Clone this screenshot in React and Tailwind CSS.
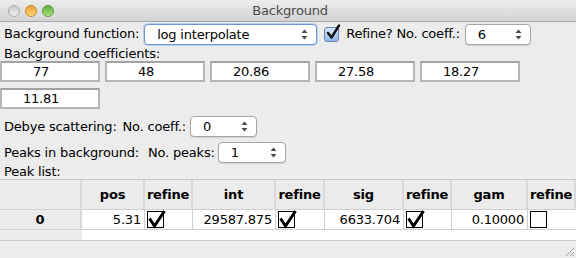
import React from "react";

const font = { fontFamily: '"DejaVu Sans", "Liberation Sans", sans-serif', letterSpacing: "-0.2px" };

function Arrows() {
  return (
    <svg width="7" height="11" viewBox="0 0 7 11" className="shrink-0">
      <path d="M3.5 0.5 L6.5 4 L0.5 4 Z" fill="#4a4a4a" />
      <path d="M3.5 10.5 L6.5 7 L0.5 7 Z" fill="#4a4a4a" />
    </svg>
  );
}

function Select({ value, w, focused }) {
  return (
    <div
      className={
        "flex items-center justify-between h-[21px] rounded-[4px] bg-white pl-[12px] pr-[8px] text-[13px] text-black " +
        (focused
          ? "border border-[#6f95cf] shadow-[0_0_0_1px_#b9d0ef]"
          : "border border-[#a6a6a6] shadow-[0_1px_1px_rgba(0,0,0,0.12)]")
      }
      style={{ width: w }}
    >
      <span className="leading-none">{value}</span>
      <Arrows />
    </div>
  );
}

function MacCheck() {
  return (
    <div className="relative w-[15px] h-[15px] rounded-[3px] border border-[#6d85ad] bg-gradient-to-b from-[#d6e6fa] to-[#8fb6ea]">
      <svg width="16" height="17" viewBox="0 0 16 17" className="absolute left-[0px] top-[-4px]">
        <path d="M3 9 L6.5 13.5 L14 1.5" fill="none" stroke="#111" strokeWidth="2.4" strokeLinecap="round" strokeLinejoin="round" />
      </svg>
    </div>
  );
}

function TableCheck({ checked }) {
  return (
    <div className="relative w-[17px] h-[17px] border-[1.5px] border-black bg-white">
      {checked && (
        <svg width="20" height="20" viewBox="0 0 20 20" className="absolute left-[-1px] top-[-3px]">
          <path d="M2.5 9.5 L7.5 17 L17.5 2" fill="none" stroke="#000" strokeWidth="3" strokeLinejoin="miter" />
        </svg>
      )}
    </div>
  );
}

function Entry({ value }) {
  return (
    <div className="w-[100px] h-[21px] bg-white border-2 border-[#b5b5b5] border-t-[#a3a3a3] flex items-center justify-center pr-[18px] text-[13px] text-black">
      {value}
    </div>
  );
}

const cols = [82, 63, 48, 83, 49, 79, 48, 76, 48];
const headers = ["", "pos", "refine", "int", "refine", "sig", "refine", "gam", "refine"];

export default function App() {
  return (
    <div className="w-[576px] h-[258px] bg-[#ececec] overflow-hidden relative" style={font}>
      {/* Title bar */}
      <div className="h-[22px] relative flex items-center justify-center bg-gradient-to-b from-[#ececec] to-[#d3d3d3] border-b border-[#a7a7a7] rounded-t-[4px]">
        <div className="absolute left-[8px] top-[5px] flex gap-[5px]">
          <div className="w-[12px] h-[12px] rounded-full bg-gradient-to-b from-[#c9c9c9] to-[#f2f2f2] border border-[#a9a9a9]" />
          <div className="w-[12px] h-[12px] rounded-full bg-gradient-to-b from-[#e9a03a] to-[#ffd86b] border border-[#c58a2f]" />
          <div className="w-[12px] h-[12px] rounded-full bg-gradient-to-b from-[#5fae3c] to-[#a8e37a] border border-[#5d9a3c]" />
        </div>
        <span className="text-[13px] text-[#4a4a4a] ml-[4px]">Background</span>
      </div>

      {/* Row 1 */}
      <div className="h-[24px] flex items-center pl-[4px] text-[13px] text-black">
        <span>Background function:</span>
        <div className="ml-[5px]">
          <Select value="log interpolate" w={173} focused />
        </div>
        <div className="ml-[7px]">
          <MacCheck />
        </div>
        <span className="ml-[7px]">Refine? No. coeff.:</span>
        <div className="ml-[5px]">
          <Select value="6" w={66} />
        </div>
      </div>

      {/* Background coefficients */}
      <div className="h-[15px] pl-[4px] text-[13px] leading-[15px] text-black">Background coefficients:</div>
      <div className="flex gap-[5px] pl-[0px]">
        <Entry value="77" />
        <Entry value="48" />
        <Entry value="20.86" />
        <Entry value="27.58" />
        <Entry value="18.27" />
      </div>
      <div className="flex mt-[6px]">
        <Entry value="11.81" />
      </div>

      {/* Debye */}
      <div className="h-[23px] mt-[6px] flex items-center pl-[4px] text-[13px] text-black">
        <span>Debye scattering:</span>
        <span className="ml-[6px]">No. coeff.:</span>
        <div className="ml-[4px]">
          <Select value="0" w={67} />
        </div>
      </div>

      {/* Peaks */}
      <div className="h-[23px] mt-[3px] flex items-center pl-[4px] text-[13px] text-black">
        <span>Peaks in background:</span>
        <span className="ml-[9px]">No. peaks:</span>
        <div className="ml-[3px]">
          <Select value="1" w={68} />
        </div>
      </div>

      <div className="h-[15px] pl-[4px] text-[13px] leading-[15px] text-black">Peak list:</div>

      {/* Table */}
      <div className="w-[576px] h-[62px] border-t border-b border-[#c9c9c9] bg-white overflow-hidden text-[13px] text-black">
        <div className="flex h-[30px] bg-[#ebebeb] border-b border-[#cfcfcf]">
          {headers.map((h, i) => (
            <div
              key={i}
              className="shrink-0 flex items-center justify-center font-bold border-r-2 border-[#d9d9d9]"
              style={{ width: cols[i] }}
            >
              {h}
            </div>
          ))}
        </div>
        <div className="flex h-[20px] border-b border-[#cfcfcf]">
          <div className="shrink-0 flex items-center justify-center font-bold bg-[#ebebeb] border-r-2 border-[#d9d9d9]" style={{ width: cols[0] }}>
            0
          </div>
          <div className="shrink-0 flex items-center justify-end pr-[3px] border-r border-[#cfcfcf]" style={{ width: cols[1] }}>5.31</div>
          <div className="shrink-0 flex items-center pl-[2px] border-r border-[#cfcfcf]" style={{ width: cols[2] }}><TableCheck checked /></div>
          <div className="shrink-0 flex items-center justify-end pr-[3px] border-r border-[#cfcfcf]" style={{ width: cols[3] }}>29587.875</div>
          <div className="shrink-0 flex items-center pl-[2px] border-r border-[#cfcfcf]" style={{ width: cols[4] }}><TableCheck checked /></div>
          <div className="shrink-0 flex items-center justify-end pr-[3px] border-r border-[#cfcfcf]" style={{ width: cols[5] }}>6633.704</div>
          <div className="shrink-0 flex items-center pl-[2px] border-r border-[#cfcfcf]" style={{ width: cols[6] }}><TableCheck checked /></div>
          <div className="shrink-0 flex items-center justify-end pr-[3px] border-r border-[#cfcfcf]" style={{ width: cols[7] }}>0.10000</div>
          <div className="shrink-0 flex items-center pl-[2px]" style={{ width: cols[8] }}><TableCheck /></div>
        </div>
        <div className="flex h-[10px]">
          <div className="bg-[#ebebeb]" style={{ width: cols[0] }} />
          <div className="flex-1 bg-white" />
        </div>
      </div>

      {/* resize grip */}
      <svg width="12" height="12" viewBox="0 0 12 12" className="absolute right-[1px] bottom-[1px]">
        <path d="M11 3 L3 11 M11 7 L7 11 M11 10 L10 11" stroke="#9a9a9a" strokeWidth="1" />
      </svg>
    </div>
  );
}
